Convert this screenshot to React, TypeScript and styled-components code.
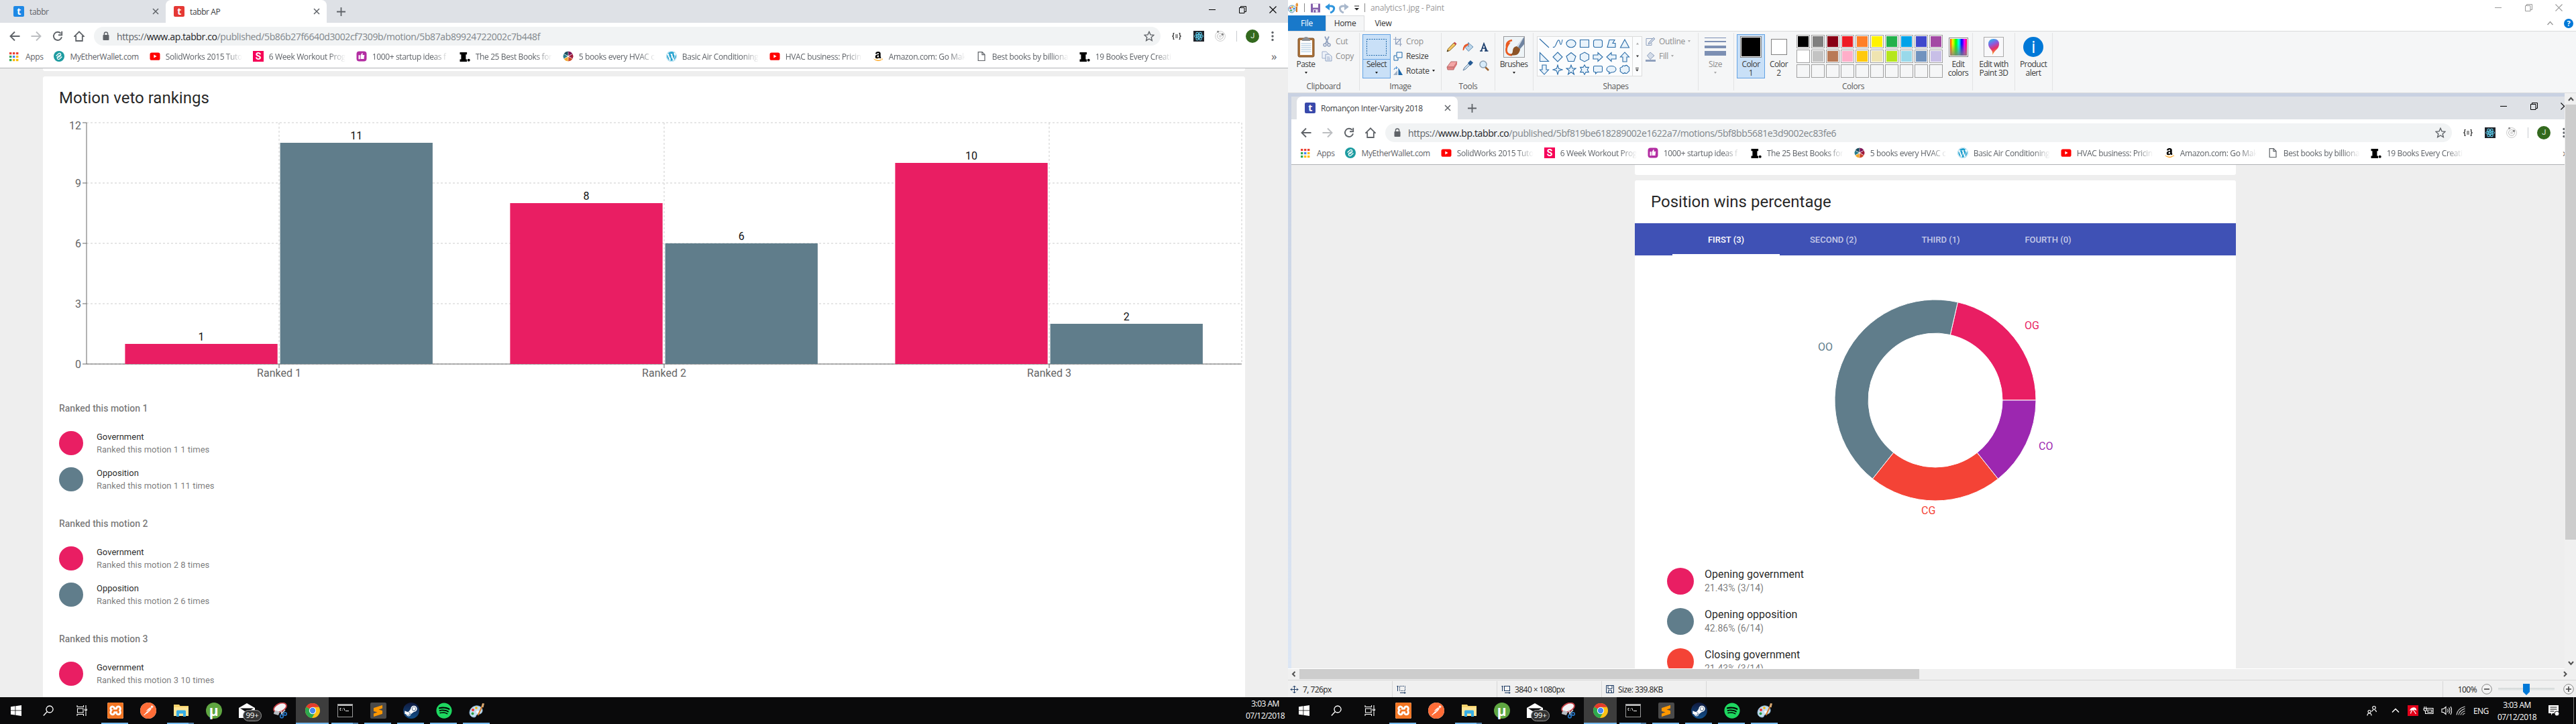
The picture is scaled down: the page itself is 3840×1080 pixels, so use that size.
import React from 'react';
import styled, { createGlobalStyle, css } from 'styled-components';
import { FaWordpress, FaSpotify, FaSteamSymbol, FaAmazon } from 'react-icons/fa';
import { SiXampp, SiPostman, SiSublimetext } from 'react-icons/si';

const PINK = '#e91e63';
const SLATE = '#607d8b';
const RED = '#f44336';
const PURPLE = '#9c27b0';

const Global = createGlobalStyle`
  * { box-sizing: border-box; }
  html, body { margin: 0; padding: 0; }
  body { width: 3840px; height: 1080px; overflow: hidden; background: #0a0a0b; }
  svg { display: block; flex: none; }
`;

const uiFont = css`
  font-family: "Open Sans", "Noto Sans", sans-serif;
  font-size: 12px;
  letter-spacing: -0.38px;
`;

/* ---------- desktop ---------- */

const Desktop = styled.div`
  display: grid;
  grid-template-columns: 1920px 1920px;
  width: 3840px;
  height: 1080px;
  ${uiFont}
`;

const Monitor = styled.div`
  display: grid;
  grid-template-rows: 1040px 40px;
  min-width: 0;
  overflow: hidden;
`;

/* ---------- browser ---------- */

const Browser = styled.div`
  display: grid;
  grid-template-rows: 34px 38px 30px 1fr;
  grid-template-columns: 1920px;
  width: 1920px;
  height: 1040px;
  flex: none;
  overflow: hidden;
  background: #fff;
`;

const TabStrip = styled.div`
  display: flex;
  align-items: stretch;
  background: #dee1e6;
  padding-left: 8px;
`;

const Tab = styled.div<{ $active?: boolean }>`
  display: flex;
  align-items: center;
  width: ${p => (p.$active ? 240 : 239)}px;
  padding: 0 10px 0 12px;
  border-radius: 8px 8px 0 0;
  background: ${p => (p.$active ? '#fff' : 'transparent')};
  color: ${p => (p.$active ? '#3c4043' : '#5f6368')};
`;

const Favicon = styled.span<{ $color: string }>`
  width: 16px;
  height: 16px;
  margin-right: 8px;
  border-radius: 2px;
  background: ${p => p.$color};
  color: #fff;
  font: 700 14px/15px "Open Sans", sans-serif;
  text-align: center;
`;

const TabTitle = styled.span`
  flex: 1;
  white-space: nowrap;
`;

const NewTab = styled.div`
  display: flex;
  align-items: center;
  padding-left: 15px;
`;

const WindowButtons = styled.div<{ $gap: number; $right: number }>`
  display: flex;
  align-items: center;
  gap: ${p => p.$gap}px;
  margin-left: auto;
  padding-right: ${p => p.$right}px;
`;

const StripButtons = styled(WindowButtons)`
  height: 28px;
`;

const Toolbar = styled.div`
  display: flex;
  align-items: center;
  padding: 2px 0 0 14px;
`;

const NavButtons = styled.div`
  display: flex;
  gap: 16px;
  width: 126px;
`;

const AddressBar = styled.div`
  display: flex;
  align-items: center;
  width: 1590px;
  height: 28px;
  padding: 0 9px 0 13px;
  border-radius: 14px;
  background: #f1f3f4;
`;

const Url = styled.span`
  flex: 1;
  padding-left: 11px;
  font-size: 14px;
  letter-spacing: -0.387px;
  white-space: nowrap;
  color: #80868b;
  b { font-weight: 400; color: #202124; }
`;

const Scheme = styled.span`
  color: #5f6368;
`;

const Extensions = styled.div`
  display: flex;
  align-items: center;
  flex: 1;
  padding-left: 16px;
`;

const Ext = styled.div<{ $w: number }>`
  display: flex;
  flex: none;
  justify-content: center;
  width: ${p => p.$w}px;
`;

const Avatar = styled.div`
  flex: none;
  width: 20px;
  height: 20px;
  border-radius: 50%;
  background: #33691e;
  color: #e8f0e2;
  font: 11px/20px Roboto, sans-serif;
  text-align: center;
`;

const Rule = styled.div`
  width: 1px;
  height: 16px;
  background: #c9ccd0;
`;

const Bookmarks = styled.div`
  display: flex;
  align-items: center;
  padding: 0 17px 5px 13px;
  border-bottom: 1px solid #b0b1b4;
  color: #5f6368;
`;

const Bookmark = styled.div`
  display: flex;
  align-items: center;
  gap: 8px;
  margin-right: 16px;
`;

const BookmarkText = styled.span<{ $fade: boolean }>`
  white-space: nowrap;
  ${p => p.$fade && css`
    width: 114px;
    mask-image: linear-gradient(90deg, #000 90px, transparent 114px);
  `}
`;

const More = styled.span`
  margin-left: auto;
  font-size: 17px;
  line-height: 16px;
`;

const Glyph = ({ d, size = 16, stroke = '#5f6368', fill = 'none', w = 2, box = 16 }:
  { d: string; size?: number; stroke?: string; fill?: string; w?: number; box?: number }) => (
  <svg width={size} height={size} viewBox={`0 0 ${box} ${box}`}>
    <path d={d} fill={fill} stroke={stroke} strokeWidth={w} />
  </svg>
);

const AppsIcon = () => (
  <svg width="17" height="16" viewBox="0 0 17 16">
    {['#ea4335', '#ea4335', '#ea4335', '#34a853', '#4285f4', '#fbbc05', '#34a853', '#fbbc05', '#fbbc05'].map((c, i) => (
      <rect key={i} x={1 + (i % 3) * 5} y={2 + Math.floor(i / 3) * 5} width="3.4" height="3.2" fill={c} />
    ))}
  </svg>
);

const EtherIcon = () => (
  <svg width="16" height="16" viewBox="0 0 16 16">
    <circle cx="8" cy="8" r="8" fill="#1c9ba0" />
    <path d="M3.6 7.5 7 4.2q2-1.6 3.4.2 1 1.6-.5 3L6.5 10" fill="none" stroke="#fff" strokeWidth="1.3" />
    <path d="M12.4 8.5 9 11.8q-2 1.6-3.4-.2-1-1.6.5-3L9.5 6" fill="none" stroke="#fff" strokeWidth="1.3" />
  </svg>
);

const YoutubeIcon = () => (
  <svg width="16" height="16" viewBox="0 0 16 16">
    <rect x="0.5" y="2.4" width="15" height="11.4" rx="2.6" fill="#f00" />
    <path d="M6.3 5.6 10.6 8l-4.3 2.4Z" fill="#fff" />
  </svg>
);

const LetterTile = styled.span`
  width: 16px;
  height: 16px;
  background: #f50057;
  color: #fff;
  font: 700 14px/16px Roboto, sans-serif;
  text-align: center;
`;

const ThumbIcon = () => (
  <svg width="16" height="16" viewBox="0 0 16 16">
    <rect x="0.5" y="0.5" width="15" height="15" rx="4" fill="#b32da2" />
    <path d="M3.5 6.3h2.2v6H3.5ZM6.6 6.5 8.8 3q1.3.2.9 1.6l-.4 1.5h3v1.2h-.6v1h.4v1.2h-.7v1h.3v1.4H6.6Z" fill="#fff" />
  </svg>
);

const InverseIcon = () => (
  <svg width="16" height="16" viewBox="0 0 16 16">
    <path d="M0.5 2h10.6v3.3H9.4v7.3h1.7V16H0.5v-3.4h1.9V5.3H0.5Z" fill="#000" />
    <circle cx="13.7" cy="13.8" r="2" fill="#000" />
  </svg>
);

const WheelIcon = () => {
  const colors = ['#7b1456', '#a01c3c', '#d0492a', '#f0a830', '#2a7e8c', '#1c4c5e'];
  return (
    <svg width="16" height="16" viewBox="-8 -8 16 16">
      {colors.map((c, i) => (
        <path key={c} d="M0 -0.8 L-3.6 -6.6 L0 -7.6 L3.6 -6.6 Z" fill={c} transform={`rotate(${i * 60 + 30})`} />
      ))}
    </svg>
  );
};

const AmazonIcon = () => (
  <svg width="16" height="16" viewBox="0 0 16 16">
    <defs>
      <linearGradient id="amz" x1="0" y1="0" x2="0" y2="448" gradientUnits="userSpaceOnUse">
        <stop offset="0.79" stopColor="#000" />
        <stop offset="0.8" stopColor="#f90" />
      </linearGradient>
    </defs>
    <FaAmazon size={16} fill="url(#amz)" />
  </svg>
);

const DocIcon = () => (
  <svg width="16" height="16" viewBox="0 0 16 16">
    <path d="M3.2 1.6h6l3.8 3.9v9H3.2Zm5.8 0v4.1h4" fill="none" stroke="#5f6368" strokeWidth="1.2" />
  </svg>
);

const bookmarks: { icon: React.ReactNode; text: string; fade: boolean }[] = [
  { icon: <AppsIcon />, text: 'Apps', fade: false },
  { icon: <EtherIcon />, text: 'MyEtherWallet.com', fade: false },
  { icon: <YoutubeIcon />, text: 'SolidWorks 2015 Tuto', fade: true },
  { icon: <LetterTile>S</LetterTile>, text: '6 Week Workout Prog', fade: true },
  { icon: <ThumbIcon />, text: '1000+ startup ideas f', fade: true },
  { icon: <InverseIcon />, text: 'The 25 Best Books for', fade: true },
  { icon: <WheelIcon />, text: '5 books every HVAC c', fade: true },
  { icon: <FaWordpress size={16} color="#1d9fce" />, text: 'Basic Air Conditioning', fade: true },
  { icon: <YoutubeIcon />, text: 'HVAC business: Pricin', fade: true },
  { icon: <AmazonIcon />, text: 'Amazon.com: Go Mak', fade: true },
  { icon: <DocIcon />, text: 'Best books by billiona', fade: true },
  { icon: <InverseIcon />, text: '19 Books Every Creati', fade: true },
];

const Minimize = ({ color }: { color: string }) => (
  <Glyph d="M0 5.5h10" box={11} size={11} stroke={color} w={1} />
);
const Restore = ({ color }: { color: string }) => (
  <Glyph d="M.5 2.5h7.5v8H.5ZM2.5 2.5v-2h8v8H8" box={11} size={11} stroke={color} w={1} />
);
const Close = ({ color }: { color: string }) => (
  <Glyph d="M.5 .5l10 10M10.5 .5l-10 10" box={11} size={11} stroke={color} w={1.1} />
);

const ReactTile = () => (
  <svg width="16" height="16" viewBox="0 0 16 16">
    <rect width="16" height="16" fill="#20232a" />
    {[0, 60, 120].map(a => (
      <ellipse key={a} cx="8" cy="8" rx="6.4" ry="2.6" fill="none" stroke="#61dafb" transform={`rotate(${a} 8 8)`} />
    ))}
    <circle cx="8" cy="8" r="1.4" fill="#61dafb" />
  </svg>
);

const OrbitIcon = () => (
  <svg width="18" height="18" viewBox="0 0 18 18">
    <circle cx="9" cy="9" r="7.4" fill="none" stroke="#ccc" />
    <circle cx="9" cy="9" r="4.4" fill="none" stroke="#bbb" />
    <circle cx="9" cy="9" r="2.2" fill="#ddd" />
    <circle cx="12.4" cy="6.2" r="1.7" fill="#888" />
    <circle cx="5.6" cy="2.2" r="1.5" fill="#888" />
  </svg>
);

type TabData = { title: string; color: string; active?: boolean };

function BrowserWindow({ tabs, host, path, children }:
  { tabs: TabData[]; host: string; path: string; children: React.ReactNode }) {
  return (
    <Browser>
      <TabStrip>
        {tabs.map(t => (
          <Tab key={t.title} $active={t.active}>
            <Favicon $color={t.color}>t</Favicon>
            <TabTitle>{t.title}</TabTitle>
            <Glyph d="M1 1l8 8M9 1l-8 8" box={10} size={10} w={1.5} />
          </Tab>
        ))}
        <NewTab><Glyph d="M6.5 0v13M0 6.5h13" box={13} size={13} w={1.8} /></NewTab>
        <StripButtons $gap={34} $right={17}>
          <Minimize color="#000" />
          <Restore color="#000" />
          <Close color="#000" />
        </StripButtons>
      </TabStrip>
      <Toolbar>
        <NavButtons>
          <Glyph d="M15.5 8H2M8 1.5 1.5 8 8 14.5" w={1.9} />
          <Glyph d="M.5 8H14M8 1.5 14.5 8 8 14.5" stroke="#bcbec1" w={1.9} />
          <Glyph d="M14 9.2A6.1 6.1 0 1 1 12.6 3.8M14.2 .8v5.4H9" w={1.9} />
          <Glyph d="M3.2 15V8.2H1L8 1.3l7 6.9h-2.2V15Z" w={1.8} />
        </NavButtons>
        <AddressBar>
          <svg width="10" height="14" viewBox="0 0 10 14">
            <rect x="0.5" y="5" width="9" height="8" rx="1" fill="#5f6368" />
            <path d="M2.4 5.4V3.6a2.6 2.6 0 0 1 5.2 0v1.8" fill="none" stroke="#5f6368" strokeWidth="1.4" />
          </svg>
          <Url><Scheme>https://</Scheme><b>{host}</b>{path}</Url>
          <Glyph d="M8 1.3l2 4.6 4.9.5-3.7 3.3 1.1 4.9L8 12l-4.3 2.6 1.1-4.9L1.1 6.4 6 5.9Z" w={1.4} />
        </AddressBar>
        <Extensions>
          <Ext $w={16}>
            <svg width="14" height="10" viewBox="0 0 14 10">
              <path d="M3.5 .5H2.2v3.2L.8 5l1.4 1.3v3.2h1.3M10.5 .5h1.3v3.2L13.2 5l-1.4 1.3v3.2h-1.3" fill="none" stroke="#222" strokeWidth="1.2" />
              <path d="M5 3h4M5 5h4M5 7h4" stroke="#444" strokeWidth="1.2" />
            </svg>
          </Ext>
          <Ext $w={50}><ReactTile /></Ext>
          <Ext $w={14}><OrbitIcon /></Ext>
          <Ext $w={34}><Rule /></Ext>
          <Ext $w={14}><Avatar>J</Avatar></Ext>
          <Ext $w={46}>
            <svg width="4" height="16" viewBox="0 0 4 16">
              {[2.5, 8, 13.5].map(y => <circle key={y} cx="2" cy={y} r="1.7" fill="#5f6368" />)}
            </svg>
          </Ext>
        </Extensions>
      </Toolbar>
      <Bookmarks>
        {bookmarks.map(b => (
          <Bookmark key={b.text}>
            {b.icon}
            <BookmarkText $fade={b.fade}>{b.text}</BookmarkText>
          </Bookmark>
        ))}
        <More>»</More>
      </Bookmarks>
      {children}
    </Browser>
  );
}

/* ---------- web pages ---------- */

const Page = styled.div<{ $side: number }>`
  display: flex;
  flex-direction: column;
  gap: 8px;
  min-height: 0;
  overflow: hidden;
  padding: 0 ${p => p.$side}px;
  background: #eee;
  font-family: Roboto, sans-serif;
  letter-spacing: 0;
`;

const CardTail = styled.div<{ $h: number }>`
  flex: none;
  height: ${p => p.$h}px;
  border-radius: 0 0 3px 3px;
  background: #fff;
`;

const Card = styled.div`
  flex: 1 0 auto;
  border-radius: 3px 3px 0 0;
  background: #fff;
`;

const CardTitle = styled.h2`
  margin: 0;
  padding: 16px 24px;
  font-size: 24px;
  line-height: 32px;
  font-weight: 400;
  color: rgba(0, 0, 0, 0.87);
`;

const Subheader = styled.h3`
  margin: 0;
  padding: 0 24px 2px;
  font-size: 14px;
  line-height: 46px;
  font-weight: 500;
  color: rgba(0, 0, 0, 0.54);
`;

const Section = styled.section`
  padding-bottom: 16px;
`;

const LegendRow = styled.div<{ $large?: boolean }>`
  display: flex;
  align-items: center;
  gap: ${p => (p.$large ? 16 : 20)}px;
  height: ${p => (p.$large ? 60 : 54)}px;
  padding-left: ${p => (p.$large ? 48 : 24)}px;
`;

const Dot = styled.div<{ $size: number; $color: string }>`
  width: ${p => p.$size}px;
  height: ${p => p.$size}px;
  border-radius: 50%;
  background: ${p => p.$color};
`;

const LegendText = styled.div<{ $large?: boolean }>`
  font-size: ${p => (p.$large ? 16 : 13)}px;
  line-height: ${p => (p.$large ? 21 : 19)}px;
  color: rgba(0, 0, 0, 0.87);
  small {
    display: block;
    font-size: ${p => (p.$large ? 14 : 13)}px;
    color: rgba(0, 0, 0, 0.54);
  }
`;

const ChartSvg = styled.svg`
  font-family: Roboto, sans-serif;
  font-size: 16px;
`;

const motions = [
  { name: 'Ranked 1', gov: 1, opp: 11 },
  { name: 'Ranked 2', gov: 8, opp: 6 },
  { name: 'Ranked 3', gov: 10, opp: 2 },
];

function VetoChart() {
  const left = 65, top = 5, band = 574, unit = 30, bottom = top + 12 * unit;
  const right = left + band * 3;
  const bar = (x: number, v: number, fill: string) => (
    <>
      <rect x={x} y={bottom - v * unit} width={227.3} height={v * unit} fill={fill} />
      <text x={x + 113.6} y={bottom - v * unit - 5} textAnchor="middle" fill="#111">{v}</text>
    </>
  );
  return (
    <ChartSvg width="1792" height="408" viewBox="0 0 1792 408">
      <g stroke="#ccc" strokeDasharray="3 3">
        {[0, 3, 6, 9, 12].map(v => <line key={v} x1={left} x2={right} y1={bottom - v * unit} y2={bottom - v * unit} />)}
        {[0.5, 1.5, 2.5, 3].map(i => <line key={i} x1={left + band * i} x2={left + band * i} y1={top} y2={bottom} />)}
      </g>
      <g stroke="#666">
        <line x1={left} x2={left} y1={top} y2={bottom} />
        <line x1={left} x2={right} y1={bottom} y2={bottom} />
        {[0, 3, 6, 9, 12].map(v => <line key={v} x1={left - 6} x2={left} y1={bottom - v * unit} y2={bottom - v * unit} />)}
        {[0.5, 1.5, 2.5].map(i => <line key={i} x1={left + band * i} x2={left + band * i} y1={bottom} y2={bottom + 6} />)}
      </g>
      {[0, 3, 6, 9, 12].map(v => (
        <text key={v} x={left - 8} y={bottom - v * unit + (v === 12 ? 10 : 6)} textAnchor="end" fill="#666">{v}</text>
      ))}
      {motions.map((m, i) => (
        <g key={m.name}>
          {bar(left + band * i + 57.4, m.gov, PINK)}
          {bar(left + band * i + 288.6, m.opp, SLATE)}
          <text x={left + band * (i + 0.5)} y={bottom + 19} textAnchor="middle" fill="#666">{m.name}</text>
        </g>
      ))}
    </ChartSvg>
  );
}

function MotionPage() {
  return (
    <Page $side={64}>
      <CardTail $h={4} />
      <Card>
        <CardTitle>Motion veto rankings</CardTitle>
        <VetoChart />
        {motions.map((m, i) => (
          <Section key={m.name}>
            <Subheader>Ranked this motion {i + 1}</Subheader>
            <LegendRow>
              <Dot $size={36} $color={PINK} />
              <LegendText>Government<small>Ranked this motion {i + 1} {m.gov} times</small></LegendText>
            </LegendRow>
            {i < 2 && (
              <LegendRow>
                <Dot $size={36} $color={SLATE} />
                <LegendText>Opposition<small>Ranked this motion {i + 1} {m.opp} times</small></LegendText>
              </LegendRow>
            )}
          </Section>
        ))}
      </Card>
    </Page>
  );
}

const CardTabs = styled.div`
  display: flex;
  height: 48px;
  padding-left: 56px;
  background: #3f51b5;
`;

const CardTab = styled.div<{ $active?: boolean }>`
  width: 160px;
  border-bottom: 2px solid ${p => (p.$active ? '#fff' : 'transparent')};
  color: ${p => (p.$active ? '#fff' : 'rgba(255, 255, 255, 0.7)')};
  font-size: 13px;
  font-weight: 500;
  line-height: 49px;
  text-align: center;
`;

const slices = [
  { id: 'OG', value: 3, color: PINK, lx: 581, ly: 110 },
  { id: 'OO', value: 6, color: SLATE, lx: 273, ly: 142 },
  { id: 'CG', value: 3, color: RED, lx: 427, ly: 386 },
  { id: 'CO', value: 2, color: PURPLE, lx: 602, ly: 290 },
];

function Donut() {
  const cx = 448, cy = 216;
  let angle = 0;
  const at = (r: number, a: number) => `${cx + r * Math.cos(a)} ${cy - r * Math.sin(a)}`;
  return (
    <ChartSvg width="896" height="456" viewBox="0 0 896 456">
      {slices.map(s => {
        const a0 = angle;
        const a1 = (angle += (s.value / 14) * Math.PI * 2);
        return (
          <g key={s.id}>
            <path
              d={`M${at(150, a0)}A150 150 0 0 0 ${at(150, a1)}L${at(100, a1)}A100 100 0 0 1 ${at(100, a0)}Z`}
              fill={s.color} stroke="#fff"
            />
            <text x={s.lx} y={s.ly} fill={s.color}>{s.id}</text>
          </g>
        );
      })}
    </ChartSvg>
  );
}

const positionLegend = [
  { name: 'Opening government', note: '21.43% (3/14)', color: PINK },
  { name: 'Opening opposition', note: '42.86% (6/14)', color: SLATE },
  { name: 'Closing government', note: '21.43% (3/14)', color: RED },
];

function PositionPage() {
  return (
    <Page $side={512}>
      <CardTail $h={15} />
      <Card>
        <CardTitle>Position wins percentage</CardTitle>
        <CardTabs>
          <CardTab $active>FIRST (3)</CardTab>
          <CardTab>SECOND (2)</CardTab>
          <CardTab>THIRD (1)</CardTab>
          <CardTab>FOURTH (0)</CardTab>
        </CardTabs>
        <Donut />
        {positionLegend.map(p => (
          <LegendRow key={p.name} $large>
            <Dot $size={40} $color={p.color} />
            <LegendText $large>{p.name}<small>{p.note}</small></LegendText>
          </LegendRow>
        ))}
      </Card>
    </Page>
  );
}

/* ---------- Paint ---------- */

const Paint = styled.div`
  display: grid;
  grid-template-rows: 23px 23px 93px 859px 16px 26px;
  width: 1920px;
  background: #fff;
`;

const TitleBar = styled.div`
  display: flex;
  align-items: center;
  gap: 8px;
  color: #999;
  letter-spacing: -0.19px;
  line-height: 22px;
`;

const ThinRule = styled.div`
  width: 1px;
  height: 13px;
  background: #888;
`;

const MenuTabs = styled.div`
  display: flex;
  line-height: 24px;
  text-align: center;
  color: #333;
`;

const MenuTab = styled.div<{ $kind?: 'file' | 'home'; $w: number }>`
  width: ${p => p.$w}px;
  margin-bottom: ${p => (p.$kind === 'home' ? -1 : 0)}px;
  letter-spacing: -0.3px;
  ${p => p.$kind === 'file' && css`background: #1979ca; color: #fff;`}
  ${p => p.$kind === 'home' && css`
    border: solid #dadbdc;
    border-width: 1px 1px 0;
    background: #f5f6f7;
    line-height: 22px;
  `}
`;

const MenuEnd = styled.div`
  display: flex;
  align-items: center;
  gap: 16px;
  margin-left: auto;
  padding-right: 4px;
`;

const HelpBadge = styled.span`
  width: 14px;
  height: 14px;
  border-radius: 50%;
  background: #0078d7;
  color: #fff;
  font: 700 11px/14px "Open Sans", sans-serif;
  text-align: center;
`;

const Ribbon = styled.div`
  display: flex;
  padding: 2px 0 3px;
  border: solid #dadbdc;
  border-width: 1px 0;
  background: #f5f6f7;
  color: #3b3b3b;
  letter-spacing: -0.55px;
`;

const Group = styled.div<{ $w: number }>`
  display: grid;
  grid-template-rows: 73px 1fr;
  width: ${p => p.$w}px;
  border-right: 1px solid #e2e3e4;
`;

const GroupBody = styled.div<{ $pad: number }>`
  display: flex;
  padding: 2px 0 0 ${p => p.$pad}px;
`;

const GroupLabel = styled.div`
  line-height: 14px;
  text-align: center;
  color: #5a5a5a;
  letter-spacing: -0.4px;
`;

const BigButton = styled.div<{ $w: number; $on?: boolean; $dim?: boolean }>`
  display: flex;
  flex-direction: column;
  align-items: center;
  width: ${p => p.$w}px;
  height: 66px;
  border: 1px solid ${p => (p.$on ? '#62a2e4' : 'transparent')};
  background: ${p => (p.$on ? '#c9e0f7' : 'transparent')};
  color: ${p => (p.$dim ? '#8d8d8d' : 'inherit')};
  line-height: 13px;
  text-align: center;
`;

const BigIcon = styled.div<{ $line?: boolean }>`
  display: grid;
  place-items: center;
  align-self: stretch;
  height: 37px;
  border-bottom: 1px solid ${p => (p.$line ? '#62a2e4' : 'transparent')};
`;

const Arrow = styled.i<{ $dim?: boolean; $inline?: boolean }>`
  display: inline-block;
  width: 0;
  height: 0;
  border: solid transparent;
  border-width: 3px 2.5px 0;
  border-top-color: ${p => (p.$dim ? '#aaa' : '#222')};
  margin: ${p => (p.$inline ? '0 0 2px -1px' : '5px 0 0')};
`;

const SmallList = styled.div<{ $pad: number }>`
  display: flex;
  flex-direction: column;
  padding-left: ${p => p.$pad}px;
`;

const SmallButton = styled.div<{ $dim?: boolean }>`
  display: flex;
  align-items: center;
  gap: 5px;
  height: 22px;
  line-height: 16px;
  color: ${p => (p.$dim ? '#8d8d8d' : 'inherit')};
  letter-spacing: -0.3px;
`;

const ToolGrid = styled.div`
  display: grid;
  grid-template-columns: repeat(3, 24px);
  grid-template-rows: 28px 28px;
  place-items: center;
  padding-top: 5px;
`;

const Gallery = styled.div`
  display: grid;
  grid-template-columns: 142px 14px;
  width: 157px;
  height: 60px;
  margin-top: 3px;
  border: 1px solid #dcdcdc;
  background: #fbfcfd;
`;

const GalleryGrid = styled.div`
  display: grid;
  grid-template-columns: repeat(7, 20px);
  grid-auto-rows: 19.7px;
  place-items: center;
  border-right: 1px solid #dcdcdc;
`;

const GalleryScroll = styled.div`
  display: flex;
  flex-direction: column;
  align-items: center;
  justify-content: space-around;
`;

const Palette = styled.div`
  display: grid;
  grid-template-columns: repeat(10, 20px);
  grid-auto-rows: 20px;
  gap: 2px;
  margin: 1px 7px 0 6px;
`;

const Swatch = styled.div<{ $color: string }>`
  border: 1px solid #a0a0a0;
  padding: 1px;
  &::before {
    content: '';
    display: block;
    height: 100%;
    background: ${p => p.$color};
    box-shadow: 0 0 0 1px ${p => (p.$color === 'transparent' ? 'transparent' : '#fff')};
  }
`;

const ColorChip = styled.div<{ $size: number; $color: string }>`
  width: ${p => p.$size}px;
  height: ${p => p.$size}px;
  border: 1px solid #808080;
  background: ${p => p.$color};
  box-shadow: inset 0 0 0 1px #fff;
`;

const Spectrum = styled.div`
  width: 29px;
  height: 29px;
  border: 1px solid #888;
  background:
    linear-gradient(180deg, transparent 30%, rgba(128, 128, 128, 0.9)),
    linear-gradient(90deg, #f00, #ff0 18%, #0f0 36%, #0ff 52%, #00f 68%, #f0f 84%, #f00);
  box-shadow: inset 0 0 0 1px #fff;
`;

const IconTile = styled.div`
  display: grid;
  place-items: center;
  width: 30px;
  height: 30px;
  border: 1px solid #aaa;
  background: #f8f8fa;
`;

const InfoDisc = styled.div`
  width: 30px;
  height: 30px;
  border-radius: 50%;
  background: #0078d7;
  color: #fff;
  font: 26px/28px "Open Sans", sans-serif;
  text-align: center;
`;

const Workspace = styled.div`
  display: grid;
  grid-template-columns: 1903px 17px;
  min-height: 0;
`;

const Canvas = styled.div`
  display: flex;
  padding: 5px 0 0 5px;
  overflow: hidden;
  border-bottom: 1px solid #fff;
  background: linear-gradient(#c8d1e2, #dce6f4);
  height: 859px;
`;

const VScroll = styled.div`
  display: grid;
  grid-template-rows: 17px 649px 1fr 17px;
  padding-left: 1px;
  background: #f0f0f0;
`;

const HScroll = styled.div`
  display: grid;
  grid-template-columns: 17px 924px 1fr 33px;
  padding-bottom: 1px;
  background: #f0f0f0;
`;

const Thumb = styled.div`
  background: #cdcdcd;
`;

const ScrollArrow = styled.div`
  display: grid;
  place-items: center;
`;

const StatusBar = styled.div`
  display: flex;
  border-top: 1px solid #d7d7d7;
  background: #f0f0f0;
  color: #222;
  letter-spacing: -0.56px;
`;

const StatusCell = styled.div<{ $w: number }>`
  display: flex;
  align-items: center;
  gap: 6px;
  width: ${p => p.$w}px;
  margin-top: 1px;
  padding-left: 6px;
  border-right: 1px solid #d7d7d7;
  &:first-child { padding-left: 3px; }
`;

const ZoomCell = styled.div`
  display: flex;
  align-items: center;
  justify-content: flex-end;
  gap: 7px;
  width: 199px;
  margin: 1px 0 0 auto;
  padding-right: 3px;
  border-left: 1px solid #d7d7d7;
`;

const ZoomTrack = styled.div`
  display: flex;
  align-items: center;
  justify-content: center;
  width: 84px;
  margin: 0 6px 0 2px;
  background: linear-gradient(#d4d8d8, #e7eaea) center / 100% 4px no-repeat;
`;

const Round = ({ plus }: { plus?: boolean }) => (
  <svg width="16" height="16" viewBox="0 0 16 16">
    <circle cx="8" cy="8" r="7.3" fill="#f4f4f4" stroke="#888" />
    <path d={plus ? 'M4 8h8M8 4v8' : 'M4 8h8'} stroke="#444" strokeWidth="1.6" />
  </svg>
);

const shapePaths = [
  'M1 1l14 13',
  'M1 13C3 15 5 11 6.500 7S10 1 11 5s2 9 4-3',
  'M8 2.200C12 2.200 15 5 15 8s-3 5.800-7 5.800S1 11 1 8s3-5.800 7-5.800Z',
  'M1.500 2.500h13v11h-13Z',
  'M4 2.500h8q2.500 0 2.500 2.500v6q0 2.500-2.500 2.500H4Q1.500 13.500 1.500 11V5Q1.500 2.500 4 2.500Z',
  'M5 2.500h8l-3 5h4v6H2Z',
  'M8 2l6.500 12h-13Z',
  'M1.500 1.500v13h13Z',
  'M8 1l7 7-7 7-7-7Z',
  'M8 1.500l7 5.500-2.700 7.500H3.700L1 7Z',
  'M8 1l6.500 3.500v7L8 15l-6.500-3.500v-7Z',
  'M1 5h7V1.500L15 8l-7 6.500V11H1Z',
  'M15 5H8V1.500L1 8l7 6.500V11h7Z',
  'M5 15V8H1.500L8 1l6.500 7H11v7Z',
  'M5 1v7H1.500L8 15l6.500-7H11V1Z',
  'M8 1l1.600 5.400L15 8l-5.400 1.600L8 15 6.400 9.600 1 8l5.400-1.600Z',
  'M8 1l1.900 5H15l-4.200 3.300L12.500 15 8 11.500 3.500 15l1.700-5.700L1 6h5.100Z',
  'M8 .8l2 3.600h4.300L12.200 8l2.100 3.600H10l-2 3.600-2-3.600H1.700L3.800 8 1.700 4.400H6Z',
  'M3 2.500h10q1.500 0 1.500 1.500v6q0 1.500-1.500 1.500H7L4.500 14v-2.500H3Q1.500 11.500 1.500 10V4Q1.500 2.500 3 2.500Z',
  'M8 2.500c4 0 7 2 7 4.800S12 12 8 12L4.500 14l.5-2.600C2.500 10.700 1 9 1 7.300c0-2.800 3-4.800 7-4.800Z',
  'M4 4q1-3 4-1.500Q11 0 12.500 3q3 1 1.800 4 1.500 3-1.500 4.500Q11 15 8 12.500 5 15 3.500 12 0 11 1.700 8-.5 5 4 4Z',
];

const swatches = [
  '#000', '#7f7f7f', '#880015', '#ed1c24', '#ff7f27', '#fff200', '#22b14c', '#00a2e8', '#3f48cc', '#a349a4',
  '#fff', '#c3c3c3', '#b97a57', '#ffaec9', '#ffc90e', '#efe4b0', '#b5e61d', '#99d9ea', '#7092be', '#c8bfe7',
  ...Array(10).fill('transparent'),
];

const PaletteIcon = () => (
  <svg width="16" height="16" viewBox="0 0 16 16">
    <path d="M6 4C2.500 4 .5 6.500 .5 9.500S3 15 6.500 15c2 0 1.500-2 2.500-2.600 1-.6 3 .4 3-2.600C12 6.500 9.500 4 6 4Z" fill="#cfe4f2" stroke="#6d9cbd" />
    <circle cx="3.500" cy="8" r="1.300" fill="#e33" /><circle cx="6.500" cy="6.600" r="1.300" fill="#f5b400" />
    <circle cx="4.500" cy="11.500" r="1.300" fill="#2a9d46" /><circle cx="9" cy="9" r="1.200" fill="#2f74d0" />
    <path d="M13 14V6" stroke="#d9771f" strokeWidth="2" /><path d="M11.500 5.500V2L13.500 0l1.500 2v3.500Z" fill="#e8963a" />
  </svg>
);

function QuickAccess() {
  return (
    <>
      <PaletteIcon />
      <ThinRule />
      <svg width="58" height="16" viewBox="0 0 58 16">
        <path d="M1 1.500h14v13H1Z" fill="#8661ad" /><path d="M4 1.500h8v6H4Z" fill="#fff" /><path d="M4.500 10h7v4.500h-7Z" fill="#e8e0f2" /><path d="M6 11h2v3.500H6Z" fill="#6b4796" />
        <path d="M23.500 6.500C31 3.500 36.500 5 35.500 9.500 35 12 33 14 30 15" fill="none" stroke="#2f95dd" strokeWidth="3" /><path d="M22.500 6.500 29 1v10.500Z" fill="#2f95dd" />
        <path d="M56.500 6.500C49 3.500 43.500 5 44.500 9.500 45 12 47 14 50 15" fill="none" stroke="#a9b8cc" strokeWidth="3" /><path d="M57.500 6.500 51 1v10.500Z" fill="#a9b8cc" />
      </svg>
      <svg width="7" height="8" viewBox="0 0 7 8"><path d="M0 1h7" stroke="#222" /><path d="M0 4h7L3.500 7.500Z" fill="#222" /></svg>
      <ThinRule />
    </>
  );
}

function RibbonBar() {
  return (
    <Ribbon>
      <Group $w={107}>
        <GroupBody $pad={6}>
          <BigButton $w={41}>
            <BigIcon>
              <svg width="26" height="32" viewBox="0 0 26 32">
                <rect x="1" y="3" width="24" height="28" rx="2" fill="#a9713a" stroke="#7c5128" />
                <rect x="4" y="6" width="18" height="22" fill="#fdfdfd" />
                <path d="M5.500 11h15M5.500 14h15M5.500 17h15M5.500 20h15M5.500 23h15" stroke="#a5c3dd" />
                <path d="M7 7V4q3 0 3-2 3-2 6 0 0 2 3 2v3Z" fill="#8c8f93" />
              </svg>
            </BigIcon>
            Paste<Arrow />
          </BigButton>
          <SmallList $pad={3}>
            <SmallButton $dim>
              <svg width="16" height="16" viewBox="0 0 16 16">
                <path d="M5 .5 10 11M11 .5 6 11" stroke="#8fa0bd" strokeWidth="1.800" />
                <circle cx="5" cy="13" r="2" fill="none" stroke="#8fa0bd" strokeWidth="1.500" /><circle cx="11" cy="13" r="2" fill="none" stroke="#8fa0bd" strokeWidth="1.500" />
              </svg>Cut
            </SmallButton>
            <SmallButton $dim>
              <svg width="16" height="16" viewBox="0 0 16 16">
                <path d="M1 1h6l3 3v7H1Z" fill="#eef2f8" stroke="#9fb0cd" />
                <path d="M6 5h5.500L15 8v7H6Z" fill="#eef2f8" stroke="#8fa3c4" /><path d="M8 9h4M8 11h5M8 13h5" stroke="#9fb0cd" />
              </svg>Copy
            </SmallButton>
          </SmallList>
        </GroupBody>
        <GroupLabel>Clipboard</GroupLabel>
      </Group>
      <Group $w={122}>
        <GroupBody $pad={4}>
          <BigButton $w={42} $on>
            <BigIcon $line>
              <svg width="30" height="25" viewBox="0 0 30 25"><rect x=".5" y=".5" width="29" height="24" fill="none" stroke="#1d66a8" strokeDasharray="2 1.500" /></svg>
            </BigIcon>
            Select<Arrow />
          </BigButton>
          <SmallList $pad={4}>
            <SmallButton $dim>
              <svg width="14" height="14" viewBox="0 0 14 14"><path d="M3.500 0v11H13M0 3.500h10.500V14M3.500 11 12 2" fill="none" stroke="#8fa0bd" strokeWidth="1.200" /></svg>
              Crop
            </SmallButton>
            <SmallButton>
              <svg width="14" height="14" viewBox="0 0 14 14"><path d="M5 1h8v8H5Z" fill="#f5f9fd" stroke="#1d66a8" /><path d="M4.500 6H1v7h6V9.500" fill="none" stroke="#1d66a8" /></svg>
              Resize
            </SmallButton>
            <SmallButton>
              <svg width="14" height="14" viewBox="0 0 14 14"><path d="M0 13l6-7v7Z" fill="#9fb0c5" /><path d="M7.500 13V2L14 13Z" fill="#1d66a8" /><path d="M1 5q0-3 4-3M4 0l2 2-2 2" fill="none" stroke="#2f7fd0" /></svg>
              Rotate<Arrow $inline />
            </SmallButton>
          </SmallList>
        </GroupBody>
        <GroupLabel>Image</GroupLabel>
      </Group>
      <Group $w={80}>
        <GroupBody $pad={3}>
          <ToolGrid>
            <svg width="16" height="16" viewBox="0 0 16 16"><path d="M1 15l1.500-4L11 2l3 3-9 8.500Z" fill="#f3c663" stroke="#8b6a2b" /><path d="M11 2l1.500-1.500 3 3L14 5Z" fill="#c8444a" /><path d="M1 15l1-2.500 1.500 1.500Z" fill="#222" /></svg>
            <svg width="17" height="16" viewBox="0 0 17 16"><path d="M9 2l7 6-7 6.500L3.500 8Z" fill="#bcd6ea" stroke="#6591b5" /><path d="M9 8V1" stroke="#5b7fa3" /><path d="M9 3Q1 3 .5 13q2 1 3-4L9 5Z" fill="#e85a2a" /></svg>
            <svg width="14" height="14" viewBox="0 0 14 14"><path d="M1 13h4M8 13h5.500M3 13 7 2l4.500 11M4.500 9h5" fill="none" stroke="#1c3f6e" strokeWidth="1.700" /><path d="M7 1l5 12H9Z" fill="#1c3f6e" /></svg>
            <svg width="17" height="14" viewBox="0 0 17 14"><path d="M1 9 7 1h9L11 9Z" fill="#f4a6a6" stroke="#b86a6a" /><path d="M1 9h10v4H2Z" fill="#e58585" stroke="#b86a6a" /><path d="M11 9l5-8v4l-5 8Z" fill="#d87474" /></svg>
            <svg width="16" height="16" viewBox="0 0 16 16"><path d="M1 15l2-4 6-6 2 2-6 6Z" fill="#cfe2f2" stroke="#63809c" /><path d="M8 4l4-4 4 3.500L12 8Z" fill="#245a94" /></svg>
            <svg width="15" height="16" viewBox="0 0 15 16"><path d="M9 10l5 5" stroke="#9b6430" strokeWidth="2.500" /><circle cx="6" cy="6" r="5" fill="#d8ecfa" stroke="#8b9fb0" strokeWidth="1.400" /></svg>
          </ToolGrid>
        </GroupBody>
        <GroupLabel>Tools</GroupLabel>
      </Group>
      <Group $w={57}>
        <GroupBody $pad={6}>
          <BigButton $w={43}>
            <BigIcon>
              <svg width="32" height="32" viewBox="0 0 32 32">
                <rect x=".5" y=".5" width="31" height="31" fill="#eef4f7" stroke="#98999c" />
                <path d="M13 6Q5 8 5 13q2-2 3-2-5 7-3 13 2 4 8 4" fill="none" stroke="#ea5a20" strokeWidth="2.800" />
                <path d="M31 1v11l-6 7-5-4Z" fill="#6f83a0" /><path d="M31 1 20 15l2 1.500Z" fill="#d5dde6" />
                <path d="M20 15q-6 1-6 7 0 4-4 6 10 2 13-3 2-3 2-6Z" fill="#8d5427" />
              </svg>
            </BigIcon>
            Brushes<Arrow />
          </BigButton>
        </GroupBody>
      </Group>
      <Group $w={246}>
        <GroupBody $pad={5}>
          <Gallery>
            <GalleryGrid>
              {shapePaths.map(d => <Glyph key={d} d={d} stroke="#2a6ca8" fill={d.endsWith('Z') ? '#e9f3fb' : 'none'} w={1.1} />)}
            </GalleryGrid>
            <GalleryScroll>
              <Glyph d="M0 3.500 2 .5l2 3Z" box={4} size={4} fill="#aaa" stroke="none" />
              <Glyph d="M0 .5h4L2 3.500Z" box={4} size={4} fill="#333" stroke="none" />
              <Glyph d="M0 0h4v.8H0ZM0 2h4L2 4.500Z" box={5} size={6} fill="#333" stroke="none" />
            </GalleryScroll>
          </Gallery>
          <SmallList $pad={5}>
            <SmallButton $dim>
              <svg width="15" height="14" viewBox="0 0 15 14"><path d="M1 2.500h9M1 2.500v10h8V9" fill="none" stroke="#8fa0bd" /><path d="M4 11l1-3 7-7 2 2-7 7Z" fill="#c9d3e2" stroke="#8fa0bd" /></svg>
              Outline<Arrow $dim $inline />
            </SmallButton>
            <SmallButton $dim>
              <svg width="15" height="15" viewBox="0 0 15 15"><path d="M7 1l6 5-6 5.500L2.500 6Z" fill="#d4dce8" stroke="#8fa0bd" /><path d="M0 12h15v3H0Z" fill="#8fa0bd" /></svg>
              Fill<Arrow $dim $inline />
            </SmallButton>
          </SmallList>
        </GroupBody>
        <GroupLabel>Shapes</GroupLabel>
      </Group>
      <Group $w={53}>
        <GroupBody $pad={4}>
          <BigButton $w={42} $dim>
            <BigIcon>
              <svg width="32" height="30" viewBox="0 0 32 30"><path d="M0 1h32v1H0ZM0 6h32v2H0ZM0 13h32v4H0ZM0 21h32v7H0Z" fill="#7c8fb3" /></svg>
            </BigIcon>
            Size<Arrow $dim />
          </BigButton>
        </GroupBody>
      </Group>
      <Group $w={356}>
        <GroupBody $pad={4}>
          <BigButton $w={42} $on>
            <BigIcon><ColorChip $size={32} $color="#000" /></BigIcon>
            Color<br />1
          </BigButton>
          <BigButton $w={41}>
            <BigIcon><ColorChip $size={24} $color="#fff" /></BigIcon>
            Color<br />2
          </BigButton>
          <Palette>{swatches.map((c, i) => <Swatch key={i} $color={c} />)}</Palette>
          <BigButton $w={32}>
            <BigIcon><Spectrum /></BigIcon>
            Edit<br />colors
          </BigButton>
        </GroupBody>
        <GroupLabel>Colors</GroupLabel>
      </Group>
      <Group $w={63}>
        <GroupBody $pad={6}>
          <BigButton $w={50}>
            <BigIcon>
              <IconTile>
                <svg width="18" height="26" viewBox="0 0 18 26">
                  <defs><linearGradient id="drop" x1="0" y1="0" x2="0.3" y2="1"><stop offset="0" stopColor="#1ec8f0" /><stop offset=".4" stopColor="#8a5be0" /><stop offset=".7" stopColor="#e8306a" /><stop offset="1" stopColor="#f8a020" /></linearGradient></defs>
                  <path d="M9 1q8 0 8 8 0 5-5 9-3 3-5 7 1-5-2-8-4-4-4-8 0-8 8-8Z" fill="url(#drop)" />
                </svg>
              </IconTile>
            </BigIcon>
            Edit with<br />Paint 3D
          </BigButton>
        </GroupBody>
      </Group>
      <Group $w={56}>
        <GroupBody $pad={4}>
          <BigButton $w={46}>
            <BigIcon><InfoDisc>i</InfoDisc></BigIcon>
            Product<br />alert
          </BigButton>
        </GroupBody>
      </Group>
    </Ribbon>
  );
}

function PaintWindow({ children }: { children: React.ReactNode }) {
  return (
    <Paint>
      <TitleBar>
        <QuickAccess />
        analytics1.jpg - Paint
        <WindowButtons $gap={34} $right={20}>
          <Minimize color="#999" />
          <Restore color="#999" />
          <Close color="#999" />
        </WindowButtons>
      </TitleBar>
      <MenuTabs>
        <MenuTab $kind="file" $w={56}>File</MenuTab>
        <MenuTab $kind="home" $w={58}>Home</MenuTab>
        <MenuTab $w={56}>View</MenuTab>
        <MenuEnd>
          <Glyph d="M.5 7 4.500 2.500 8.500 7" box={9} size={9} stroke="#999" w={1.4} />
          <HelpBadge>?</HelpBadge>
        </MenuEnd>
      </MenuTabs>
      <RibbonBar />
      <Workspace>
        <Canvas>{children}</Canvas>
        <VScroll>
          <ScrollArrow><Glyph d="M1 7 4.500 3 8 7" box={9} size={9} stroke="#505050" w={2} /></ScrollArrow>
          <Thumb />
          <div />
          <ScrollArrow><Glyph d="M1 2 4.500 6 8 2" box={9} size={9} stroke="#505050" w={2} /></ScrollArrow>
        </VScroll>
      </Workspace>
      <HScroll>
        <ScrollArrow><Glyph d="M6.500 1 3 4.500 6.500 8" box={9} size={9} stroke="#505050" w={2} /></ScrollArrow>
        <Thumb />
        <div />
        <ScrollArrow><Glyph d="M3 1 6.500 4.500 3 8" box={9} size={9} stroke="#505050" w={2} /></ScrollArrow>
      </HScroll>
      <StatusBar>
        <StatusCell $w={156}>
          <Glyph d="M6.500 1v11M1 6.500h11M4.500 3l2-2 2 2M4.500 10l2 2 2-2M3 4.500l-2 2 2 2M10 4.500l2 2-2 2" box={13} size={13} stroke="#1c3a63" w={1} />
          7, 726px
        </StatusCell>
        <StatusCell $w={156}>
          <svg width="14" height="13" viewBox="0 0 14 13"><rect x="4.500" y="1.500" width="8" height="7" fill="none" stroke="#1c3a63" strokeDasharray="1.500 1" /><path d="M1.500 1v8M0 2.500 1.500 1 3 2.500M5 11.500h8M11.500 10l1.500 1.500-1.500 1.500" fill="none" stroke="#1c3a63" /></svg>
        </StatusCell>
        <StatusCell $w={156}>
          <svg width="14" height="13" viewBox="0 0 14 13"><rect x="4.500" y="1.500" width="8" height="7" fill="none" stroke="#1c3a63" /><path d="M1.500 1v8M0 2.500 1.500 1 3 2.500M5 11.500h8M11.500 10l1.500 1.500-1.500 1.500" fill="none" stroke="#1c3a63" /></svg>
          3840 × 1080px
        </StatusCell>
        <StatusCell $w={156}>
          <svg width="12" height="12" viewBox="0 0 12 12"><path d="M.5 .5h11v11H.5ZM3 .5v5h6v-5M3.500 11.500V8h5v3.500" fill="none" stroke="#1c3a63" /></svg>
          Size: 339.8KB
        </StatusCell>
        <ZoomCell>
          100%
          <Round />
          <ZoomTrack>
            <svg width="10" height="17" viewBox="0 0 10 17"><path d="M0 0h10v12l-5 5-5-5Z" fill="#0078d7" /></svg>
          </ZoomTrack>
          <Round plus />
        </ZoomCell>
      </StatusBar>
    </Paint>
  );
}

/* ---------- taskbar ---------- */

const Taskbar = styled.div`
  display: flex;
  background: #0a0a0b;
  color: #fff;
`;

const Tile = styled.div<{ $w?: number; $on?: boolean; $run?: boolean; $stack?: boolean }>`
  display: grid;
  place-items: center;
  flex: none;
  position: relative;
  width: ${p => p.$w ?? 49}px;
  background: ${p => (p.$on ? '#3d3d3d' : 'transparent')};
  &::after {
    content: '';
    position: absolute;
    left: ${p => (p.$on ? 0 : 4)}px;
    right: ${p => (p.$on ? 0 : 5)}px;
    bottom: 0;
    height: 2px;
    background: ${p => p.$run
    ? (p.$stack ? 'linear-gradient(90deg, #76b9ed 80%, #4f7da6 80%)' : '#76b9ed')
    : 'transparent'};
  }
`;

const CountBadge = styled.span`
  position: absolute;
  left: 19px;
  top: 19px;
  width: 28px;
  height: 17px;
  border: 1px solid #999;
  border-radius: 9px;
  background: #333;
  font-size: 11.500px;
  line-height: 14px;
  letter-spacing: -0.2px;
  text-align: center;
`;

const Disc = styled.span<{ $bg: string; $square?: boolean }>`
  display: grid;
  place-items: center;
  width: 24px;
  height: 24px;
  border-radius: ${p => (p.$square ? 2 : 12)}px;
  background: ${p => p.$bg};
`;

const Mu = styled.span`
  color: #fff;
  font: 700 21px/20px "Open Sans", sans-serif;
`;

const Clock = styled.div`
  width: 62px;
  padding-top: 1px;
  font-size: 12px;
  line-height: 18px;
  letter-spacing: -0.55px;
  text-align: center;
`;

const Tray = styled.div`
  display: flex;
  align-items: center;
  margin-left: auto;
  letter-spacing: -0.6px;
`;

const TrayItem = styled.div<{ $w: number }>`
  display: grid;
  place-items: center;
  width: ${p => p.$w}px;
`;

const ShowDesktop = styled.div`
  align-self: stretch;
  width: 4px;
  border-left: 1px solid #777;
`;

const LeftClock = styled(Clock)`
  margin-left: auto;
  margin-right: 3px;
`;

const ChromeIcon = () => (
  <svg width="24" height="24" viewBox="0 0 24 24">
    <circle cx="12" cy="12" r="11" fill="#fbc116" />
    <path d="M12 12 2.500 6.500A11 11 0 0 1 21.600 6.700H12Z" fill="#e33b2e" />
    <path d="M12 12 2.500 6.500A11 11 0 0 0 11 23l5-8.500Z" fill="#2da94f" />
    <circle cx="12" cy="12" r="5.200" fill="#fff" /><circle cx="12" cy="12" r="4.200" fill="#4688f1" />
  </svg>
);

function AppTiles() {
  return (
    <>
      <Tile $w={47}>
        <svg width="16" height="16" viewBox="0 0 16 16"><path d="M0 2.200 6.500 1.300v6.200H0ZM7.300 1.200 16 0v7.500H7.300ZM0 8.300h6.500v6.300L0 13.700ZM7.300 8.300H16V16l-8.700-1.300Z" fill="#fff" /></svg>
      </Tile>
      <Tile><Glyph d="M10 1a5 5 0 1 1-.01 0ZM6.300 9.500 .8 15.500" stroke="#fff" w={1.3} /></Tile>
      <Tile $w={51}><Glyph d="M1 0v2.500h9.500V0M1.500 5h8.500v6H1.500ZM1 16v-2.500h9.500V16M14 0v5M14 8.500V16M12.500 6h3v1.500h-3Z" stroke="#fff" w={1.1} /></Tile>
      <Tile $run><Disc $bg="#fff" $square><SiXampp size={24} color="#f37623" /></Disc></Tile>
      <Tile><Disc $bg="#fff"><SiPostman size={24} color="#ff6c37" /></Disc></Tile>
      <Tile $run $stack>
        <svg width="24" height="24" viewBox="0 0 24 24"><path d="M1 3h8l1.500 2H23v15H1Z" fill="#f7d36c" /><path d="M1 7h22v13H1Z" fill="#ffe596" /><path d="M5 21v-8q0-1.500 1.500-1.500h11q1.500 0 1.500 1.500v8h-4v-4.500H9V21Z" fill="#37aee6" /></svg>
      </Tile>
      <Tile><Disc $bg="#5fa641"><Mu>µ</Mu></Disc></Tile>
      <Tile>
        <svg width="24" height="22" viewBox="0 0 24 22"><path d="M0 7 12 0l12 7v15H0Z" fill="#fff" /><path d="M2 7.500h20L12 14Z" fill="#0a0a0b" /></svg>
        <CountBadge>99+</CountBadge>
      </Tile>
      <Tile>
        <svg width="24" height="24" viewBox="0 0 24 24"><ellipse cx="12.500" cy="7.500" rx="10" ry="6" fill="#f4f4f6" stroke="#c9444a" strokeWidth="1.800" transform="rotate(-25 12.500 7.500)" /><path d="M3 17q0-4 4-5l5 2-2 5Z" fill="#b9bcc2" /><path d="M13 11l4 9M20 11l-6 6" stroke="#d0d6dd" strokeWidth="1.500" /><circle cx="15" cy="20.500" r="2.300" fill="none" stroke="#2673c0" strokeWidth="1.700" /><circle cx="20" cy="17" r="2.200" fill="none" stroke="#2673c0" strokeWidth="1.700" /></svg>
      </Tile>
      <Tile $on $run><ChromeIcon /></Tile>
      <Tile $run $stack>
        <svg width="23" height="20" viewBox="0 0 23 20"><rect x=".5" y=".5" width="22" height="19" fill="#050505" stroke="#9a9a9a" /><path d="M1 1h21v2H1Z" fill="#bbb" /><path d="M5.500 6.500H4v3h1.500M7.500 7v.6M7.500 9v.6M9.500 6l1.500 4M12 10.500h5" fill="none" stroke="#eee" /></svg>
      </Tile>
      <Tile $run><Disc $bg="#4a4a4a" $square><SiSublimetext size={17} color="#ff9800" /></Disc></Tile>
      <Tile $run><Disc $bg="linear-gradient(#10193d, #12508a)"><FaSteamSymbol size={21} color="#fff" /></Disc></Tile>
      <Tile $run><Disc $bg="#000"><FaSpotify size={24} color="#1ed760" /></Disc></Tile>
      <Tile $run>
        <svg width="24" height="24" viewBox="0 0 24 24">
          <path d="M10 5C4 6 1 11 1 15s3 7 7 7c3 0 2-3 4-4s7 0 8-5-4-9-10-8Z" fill="#c4def0" stroke="#7fa9c8" />
          <circle cx="6" cy="11" r="2" fill="#e33" /><circle cx="11" cy="8" r="1.800" fill="#f5b400" /><circle cx="5.500" cy="16.500" r="2" fill="#2a9d46" /><circle cx="13" cy="14" r="2" fill="#fff" />
          <path d="M20 5 13.500 19" stroke="#d9771f" strokeWidth="1.800" /><path d="M18.500 6 20 1l3 .5-1.500 6Z" fill="#d8a871" />
        </svg>
      </Tile>
    </>
  );
}

const ClockText = () => <>3:03 AM<br />07/12/2018</>;

export default function App() {
  return (
    <>
      <Global />
      <Desktop>
        <Monitor>
          <BrowserWindow
            tabs={[
              { title: 'tabbr', color: '#1e88e5' },
              { title: 'tabbr AP', color: '#e53935', active: true },
            ]}
            host="www.ap.tabbr.co"
            path="/published/5b86b27f6640d3002cf7309b/motion/5b87ab89924722002c7b448f"
          >
            <MotionPage />
          </BrowserWindow>
          <Taskbar>
            <AppTiles />
            <LeftClock><ClockText /></LeftClock>
          </Taskbar>
        </Monitor>
        <Monitor>
          <PaintWindow>
            <BrowserWindow
              tabs={[{ title: 'Romançon Inter-Varsity 2018', color: '#3949ab', active: true }]}
              host="www.bp.tabbr.co"
              path="/published/5bf819be618289002e1622a7/motions/5bf8bb5681e3d9002ec83fe6"
            >
              <PositionPage />
            </BrowserWindow>
          </PaintWindow>
          <Taskbar>
            <AppTiles />
            <Tray>
              <TrayItem $w={34}>
                <Glyph d="M4 7.500a2 2 0 1 1-.01 0M1 15.500q0-3.500 3-3.500t3 3.500M11 1.500a2.300 2.300 0 1 1-.01 0M7.500 9.500q1-3 3.500-3t3.500 3.500" stroke="#fff" w={1.2} />
              </TrayItem>
              <TrayItem $w={36}><Glyph d="M1 8.500 6 3.500l5 5" box={12} size={12} stroke="#fff" w={1.5} /></TrayItem>
              <TrayItem $w={12}>
                <svg width="16" height="16" viewBox="0 0 16 16"><rect width="16" height="16" fill="#e2001a" /><path d="M3 8.500Q4 3.500 9 3.200q4.500 0 4.200 5Q10.500 5.500 8.500 7.500 5.500 6.500 3 8.500Z" fill="#fff" /><path d="M8.500 7 12.500 13M7 7.500Q5 9 4.500 12.500" fill="none" stroke="#fff" strokeWidth="1.300" /></svg>
              </TrayItem>
              <TrayItem $w={38}><Glyph d="M5.500 4.500H15v8H3.500V9M2 2v2.500M4.500 2v2.500M1 5h4.500v2L3.500 9 1 7ZM7 7h6v3.500H7Z" stroke="#fff" w={1.1} /></TrayItem>
              <TrayItem $w={10}><Glyph d="M1 5.500h2.500L7 2.500v11L3.500 10.500H1ZM9.500 5.500q1.500 2.500 0 5M11.500 3.500q3 4.500 0 9M14 2q3.500 6 0 12" stroke="#fff" w={1.1} /></TrayItem>
              <TrayItem $w={38}><Glyph d="M2 14.500Q3 5 14.500 2M5 14.500Q6 8 14.500 5M8 14.500Q9 10.500 14.500 8.500M11 14.500Q12 12.500 14.500 12" stroke="#ddd" w={1.1} /></TrayItem>
              <TrayItem $w={22}>ENG</TrayItem>
              <TrayItem $w={12} />
              <Clock><ClockText /></Clock>
              <TrayItem $w={48}>
                <svg width="18" height="18" viewBox="0 0 18 18"><path d="M1 1h15v12H7l-2 3v-3H1Z" fill="#fff" /><path d="M3.500 4h10M3.500 7h10M3.500 10h6" stroke="#0a0a0b" /><circle cx="13.500" cy="13.500" r="3.500" fill="#fff" stroke="#0a0a0b" /></svg>
              </TrayItem>
              <TrayItem $w={5} />
              <ShowDesktop />
            </Tray>
          </Taskbar>
        </Monitor>
      </Desktop>
    </>
  );
}
